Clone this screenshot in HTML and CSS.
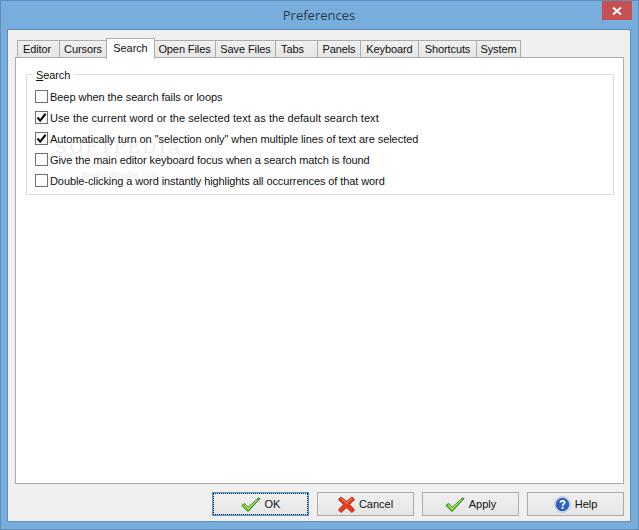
FILE: index.html
```html
<!DOCTYPE html>
<html lang="en">
<head>
<meta charset="utf-8">
<title>Preferences</title>
<link rel="stylesheet" href="styles.css">
</head>
<body>
<div class="window">
  <div class="titlebar">
    <div class="title">Preferences</div>
    <button class="close" aria-label="Close">
      <svg width="10" height="10" viewBox="0 0 10 10"><path d="M1 1.5L9 8.5M9 1.5L1 8.5" stroke="#fff" stroke-width="2"/></svg>
    </button>
  </div>
  <div class="client">
    <div class="tabs">
      <div class="tab tab-editor">Editor</div>
      <div class="tab">Cursors</div>
      <div class="tab active">Search</div>
      <div class="tab">Open Files</div>
      <div class="tab">Save Files</div>
      <div class="tab tab-tabs">Tabs</div>
      <div class="tab">Panels</div>
      <div class="tab">Keyboard</div>
      <div class="tab">Shortcuts</div>
      <div class="tab">System</div>
    </div>
    <div class="panel">
      <div class="group">
        <div class="legend"><span class="ul">S</span>earch</div>
        <div class="mark"><div class="mark-big">SOFTPEDIA</div><div class="mark-small">www.softpedia.com</div></div>
        <div class="option tight"><span class="box"></span><span>Beep when the search fails or loops</span></div>
        <div class="option loose"><span class="box"><svg width="13" height="13" viewBox="0 0 13 13"><path d="M2.5 6.5L5.2 9.6L10.6 2.8" fill="none" stroke="#111" stroke-width="2.2"/></svg></span><span>Use the current word or the selected text as the default search text</span></div>
        <div class="option tight"><span class="box"><svg width="13" height="13" viewBox="0 0 13 13"><path d="M2.5 6.5L5.2 9.6L10.6 2.8" fill="none" stroke="#111" stroke-width="2.2"/></svg></span><span>Automatically turn on "selection only" when multiple lines of text are selected</span></div>
        <div class="option tighter"><span class="box"></span><span>Give the main editor keyboard focus when a search match is found</span></div>
        <div class="option tighter"><span class="box"></span><span>Double-clicking a word instantly highlights all occurrences of that word</span></div>
      </div>
    </div>
    <div class="buttons">
      <button class="btn focus"><span class="focus-ring">
        <svg width="20" height="15" viewBox="0 0 20 15"><path d="M1 8.5L3.5 6.5L7 10.5L17.5 1L19 1.5L7 14.5Z" fill="#7ed321" stroke="#1b7a1b" stroke-width="1"/><path d="M3.5 7.5L7 11.5L16 3" fill="none" stroke="#fff" stroke-width=".8" opacity=".7"/></svg>
        <span>OK</span></span></button>
      <button class="btn">
        <svg width="17" height="17" viewBox="0 0 17 17"><path d="M3 1L8.5 5.5L14 1L16.5 3.5L11.5 8.5L16.5 14L14 16.5L8.5 11.5L3 16.5L.5 14L5.5 8.5L.5 3.5Z" fill="#ef3b1d" stroke="#b32a10" stroke-width="1"/><path d="M3.2 2.4L8.5 7L13.8 2.4" fill="none" stroke="#ff9d7d" stroke-width="1"/></svg>
        <span>Cancel</span></button>
      <button class="btn">
        <svg width="20" height="15" viewBox="0 0 20 15"><path d="M1 8.5L3.5 6.5L7 10.5L17.5 1L19 1.5L7 14.5Z" fill="#7ed321" stroke="#1b7a1b" stroke-width="1"/><path d="M3.5 7.5L7 11.5L16 3" fill="none" stroke="#fff" stroke-width=".8" opacity=".7"/></svg>
        <span>Apply</span></button>
      <button class="btn">
        <svg width="17" height="17" viewBox="0 0 17 17"><circle cx="8.5" cy="8.5" r="8" fill="#dfe8f5" stroke="#b9c8de"/><circle cx="8.5" cy="8.5" r="6.3" fill="#2a63c4" stroke="#1c4a9c" stroke-width=".8"/><path d="M6.3 6.6C6.4 4.4 10.8 4.4 10.8 6.6C10.8 8.1 8.6 8 8.6 9.7" fill="none" stroke="#fff" stroke-width="1.7"/><rect x="7.6" y="10.8" width="2" height="2" fill="#fff"/></svg>
        <span>Help</span></button>
    </div>
  </div>
</div>
</body>
</html>
```
FILE: styles.css
```css
* { box-sizing: border-box; }
html, body { margin: 0; padding: 0; }
body {
  width: 639px;
  height: 530px;
  overflow: hidden;
  font-family: "Liberation Sans", Arial, sans-serif;
  font-size: 11px;
  color: #111;
}
.window {
  width: 639px;
  height: 530px;
  background: #78aedd;
  border: 1px solid #5f8db8;
  padding: 0 7px 7px 6px;
  display: flex;
  flex-direction: column;
}
.titlebar {
  height: 28px;
  flex: none;
  display: flex;
  position: relative;
  justify-content: center;
}
.title {
  font-family: "Open Sans", sans-serif;
  font-size: 13px;
  color: #2b3a46;
  line-height: 28px;
}
.close {
  position: absolute;
  right: -1px;
  top: 0;
  width: 30px;
  height: 19px;
  background: #c75050;
  border: 0;
  padding: 0;
  display: flex;
  align-items: center;
  justify-content: center;
}
.client {
  flex: 1;
  background: #f0f0f0;
  border: 1px solid #5f8db8;
  padding: 7px 6px 5px 7px;
  display: flex;
  flex-direction: column;
}
.tabs {
  display: grid;
  grid-template-columns: 42px 47px 48px 61px 60px 42px 43px 58px 58px 45px;
  height: 20px;
  margin-top: 1px;
  margin-left: 2px;
  margin-bottom: -1px;
  align-items: end;
  position: relative;
  z-index: 1;
}
.tab {
  height: 18px;
  background: linear-gradient(#f0f0f0, #e6e6e6);
  border: 1px solid #acacac;
  border-right-width: 0;
  line-height: 16px;
  text-align: center;
  margin-bottom: 1px;
  white-space: nowrap;
  letter-spacing: -.1px;
}
.tab-editor { padding-right: 3px; }
.tab-tabs { padding-right: 8px; }
.tab:last-child { border-right-width: 1px; }
.tab.active {
  height: 21px;
  background: #fff;
  border-right-width: 1px;
  border-bottom: 0;
  margin-bottom: 0;
  margin-right: -1px;
  position: relative;
  z-index: 2;
  line-height: 18px;
}
.tab.active + .tab { border-left-width: 0; }
.panel {
  flex: 1;
  background: #fff;
  border: 1px solid #acacac;
  padding: 16px 9px 0 10px;
}
.group {
  height: 121px;
  border: 1px solid #dcdcdc;
  padding: 11px 8px 0;
  position: relative;
}
.legend {
  position: absolute;
  top: -7px;
  left: 5px;
  background: #fff;
  padding: 0 4px;
  line-height: 14px;
  letter-spacing: -.1px;
}
.ul { text-decoration: underline; }
.option {
  display: flex;
  align-items: center;
  height: 21px;
  gap: 2px;
  white-space: nowrap;
  position: relative;
}
.loose { letter-spacing: .07px; }
.tight { letter-spacing: -.05px; }
.tighter { letter-spacing: -.09px; }
.box {
  width: 13px;
  height: 13px;
  flex: none;
  border: 1px solid #707070;
  background: #fff;
  display: flex;
  align-items: center;
  justify-content: center;
}
.box svg { flex: none; }
.mark {
  position: absolute;
  left: 28px;
  top: 62px;
  color: #000;
  opacity: .07;
  pointer-events: none;
  letter-spacing: 0;
}
.mark-big { font-family: "DejaVu Serif", serif; font-size: 17px; letter-spacing: 2.5px; line-height: 20px; }
.mark-small { font-size: 9px; margin-left: 26px; line-height: 12px; margin-top: 12px; }
.buttons {
  margin-top: 8px;
  height: 24px;
  display: flex;
  justify-content: flex-end;
  gap: 8px;
  flex: none;
}
.btn {
  width: 97px;
  height: 24px;
  padding: 0;
  font: inherit;
  color: #111;
  background: linear-gradient(#f0f0f0, #e5e5e5);
  border: 1px solid #acacac;
  display: flex;
  align-items: center;
  justify-content: center;
  gap: 4px;
}
.btn.focus { border-color: #3d9bf5; }
.focus-ring {
  width: 95px;
  height: 22px;
  border: 1px dotted #000;
  display: flex;
  align-items: center;
  justify-content: center;
  gap: 4px;
}
```
